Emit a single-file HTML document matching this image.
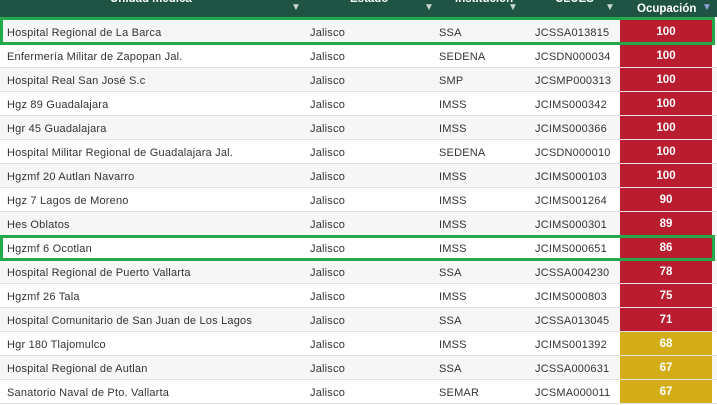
<html><head><style>
body{margin:0;width:717px;height:405px;overflow:hidden;background:#fff;font-family:"Liberation Sans",sans-serif;font-size:11px;color:#333;position:relative}
.hd{position:absolute;left:0;top:0;width:717px;height:17px;background:#1f5444;color:#fff;font-weight:bold;font-size:11.5px}
.hd span{position:absolute}
.ar{font-size:10px;color:#c8d6d0;top:2px}
.r{position:absolute;left:0;width:717px;height:24px;border-bottom:1px solid #e2e2e2;box-sizing:border-box}
.r.g{background:#f6f6f6}
.r span{position:absolute;top:6px;line-height:14px;letter-spacing:0.2px}
.o{position:absolute;left:620px;width:92px;top:0;height:23px;color:#fff;font-weight:bold;text-align:center;line-height:25px;font-size:11.5px}
.red{background:#b91d2f}.yel{background:#d4ae19}
.box{position:absolute;left:0;width:715px;border:3px solid #23a84b;box-sizing:border-box}
</style></head><body>
<div class="hd">
<span style="left:110px;top:-7px">Unidad médica</span><span class="ar" style="left:291px">▼</span>
<span style="left:350px;top:-7px">Estado</span><span class="ar" style="left:424px">▼</span>
<span style="left:455px;top:-7px">Institución</span><span class="ar" style="left:508px">▼</span>
<span style="left:555px;top:-7px">CLUES</span><span class="ar" style="left:605px">▼</span>
<span style="left:637px;top:3px">Ocupación</span><span class="ar" style="left:702px;color:#8fa3d8">▼</span>
</div>
<div id="rows"></div>
<script>
var d=[["Hospital Regional de La Barca","SSA","JCSSA013815",100],["Enfermería Militar de Zapopan Jal.","SEDENA","JCSDN000034",100],["Hospital Real San José S.c","SMP","JCSMP000313",100],["Hgz 89 Guadalajara","IMSS","JCIMS000342",100],["Hgr 45 Guadalajara","IMSS","JCIMS000366",100],["Hospital Militar Regional de Guadalajara Jal.","SEDENA","JCSDN000010",100],["Hgzmf 20 Autlan Navarro","IMSS","JCIMS000103",100],["Hgz 7 Lagos de Moreno","IMSS","JCIMS001264",90],["Hes Oblatos","IMSS","JCIMS000301",89],["Hgzmf 6 Ocotlan","IMSS","JCIMS000651",86],["Hospital Regional de Puerto Vallarta","SSA","JCSSA004230",78],["Hgzmf 26 Tala","IMSS","JCIMS000803",75],["Hospital Comunitario de San Juan de Los Lagos","SSA","JCSSA013045",71],["Hgr 180 Tlajomulco","IMSS","JCIMS001392",68],["Hospital Regional de Autlan","SSA","JCSSA000631",67],["Sanatorio Naval de Pto. Vallarta","SEMAR","JCSMA000011",67]];
var h="";d.forEach(function(r,i){var y=20+i*24;h+='<div class="r'+(i%2==0?' g':'')+'" style="top:'+y+'px"><span style="left:7px">'+r[0]+'</span><span style="left:310px">Jalisco</span><span style="left:439px">'+r[1]+'</span><span style="left:535px">'+r[2]+'</span><div class="o '+(r[3]>=70?'red':'yel')+'">'+r[3]+'</div></div>';});
h+='<div class="box" style="top:17px;height:28px"></div><div class="box" style="top:235px;height:26px"></div>';
document.getElementById("rows").innerHTML=h;
</script>
</body></html>
